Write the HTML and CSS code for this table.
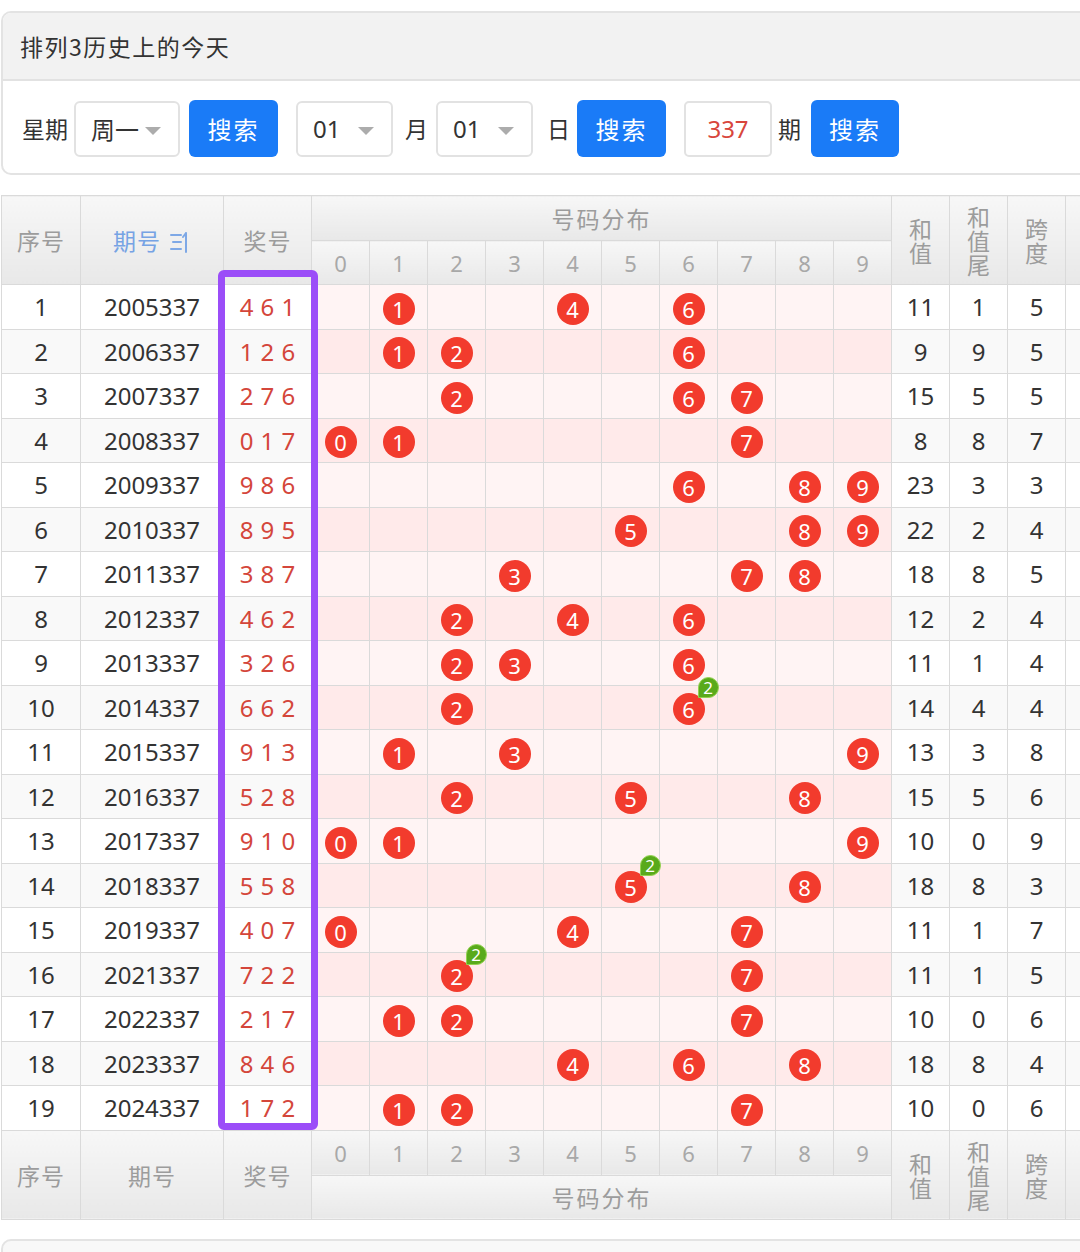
FILE: index.html
```html
<!DOCTYPE html>
<html lang="zh-CN">
<head>
<meta charset="utf-8">
<title>排列3历史上的今天</title>
<link rel="stylesheet" href="styles.css">
</head>
<body>
<div class="page">
  <div class="panel">
    <div class="panel-head">排列3历史上的今天</div>
    <div class="controls">
      <span class="lbl">星期</span>
      <div class="sel s-week">周一<span class="caret"></span></div>
      <div class="btn m-btn1">搜索</div>
      <div class="sel s-num m-sel2">01<span class="caret"></span></div>
      <span class="lbl m-yue">月</span>
      <div class="sel s-num m-sel3">01<span class="caret"></span></div>
      <span class="lbl m-ri">日</span>
      <div class="btn m-btn2">搜索</div>
      <div class="inp m-inp">337</div>
      <span class="lbl m-qi">期</span>
      <div class="btn m-btn3">搜索</div>
    </div>
  </div>

  <div class="grid-wrap">
    <table class="trend">
      <colgroup>
        <col class="c-seq"><col class="c-issue"><col class="c-award">
        <col class="c-d"><col class="c-d"><col class="c-d"><col class="c-d"><col class="c-d">
        <col class="c-d"><col class="c-d"><col class="c-d"><col class="c-d"><col class="c-d">
        <col class="c-d"><col class="c-d"><col class="c-d"><col class="c-d">
      </colgroup>
      <thead>
        <tr class="h1">
          <th rowspan="2">序号</th>
          <th rowspan="2" class="sort">期号 <svg class="sort-ic" width="22" height="24" viewBox="0 0 22 24"><g stroke="#7ea8e6" stroke-width="2" fill="none" stroke-linecap="round"><path d="M2 5h10M4 12h8M2 19h10"/><path d="M17 3v19M17 3l-3 4"/></g></svg></th>
          <th rowspan="2">奖号</th>
          <th colspan="10" class="dist">号码分布</th>
          <th rowspan="2" class="v"><span class="vt">和值</span></th>
          <th rowspan="2" class="v"><span class="vt">和值尾</span></th>
          <th rowspan="2" class="v"><span class="vt">跨度</span></th>
          <th rowspan="2"></th>
        </tr>
        <tr class="h2">
          <th class="dg">0</th><th class="dg">1</th><th class="dg">2</th><th class="dg">3</th><th class="dg">4</th><th class="dg">5</th><th class="dg">6</th><th class="dg">7</th><th class="dg">8</th><th class="dg">9</th>
        </tr>
      </thead>
      <tbody>
        <tr><td>1</td><td>2005337</td><td class="aw">4 6 1</td><td class="d"></td><td class="d"><i class="b">1</i></td><td class="d"></td><td class="d"></td><td class="d"><i class="b">4</i></td><td class="d"></td><td class="d"><i class="b">6</i></td><td class="d"></td><td class="d"></td><td class="d"></td><td>11</td><td>1</td><td>5</td><td></td></tr>
        <tr><td>2</td><td>2006337</td><td class="aw">1 2 6</td><td class="d"></td><td class="d"><i class="b">1</i></td><td class="d"><i class="b">2</i></td><td class="d"></td><td class="d"></td><td class="d"></td><td class="d"><i class="b">6</i></td><td class="d"></td><td class="d"></td><td class="d"></td><td>9</td><td>9</td><td>5</td><td></td></tr>
        <tr><td>3</td><td>2007337</td><td class="aw">2 7 6</td><td class="d"></td><td class="d"></td><td class="d"><i class="b">2</i></td><td class="d"></td><td class="d"></td><td class="d"></td><td class="d"><i class="b">6</i></td><td class="d"><i class="b">7</i></td><td class="d"></td><td class="d"></td><td>15</td><td>5</td><td>5</td><td></td></tr>
        <tr><td>4</td><td>2008337</td><td class="aw">0 1 7</td><td class="d"><i class="b">0</i></td><td class="d"><i class="b">1</i></td><td class="d"></td><td class="d"></td><td class="d"></td><td class="d"></td><td class="d"></td><td class="d"><i class="b">7</i></td><td class="d"></td><td class="d"></td><td>8</td><td>8</td><td>7</td><td></td></tr>
        <tr><td>5</td><td>2009337</td><td class="aw">9 8 6</td><td class="d"></td><td class="d"></td><td class="d"></td><td class="d"></td><td class="d"></td><td class="d"></td><td class="d"><i class="b">6</i></td><td class="d"></td><td class="d"><i class="b">8</i></td><td class="d"><i class="b">9</i></td><td>23</td><td>3</td><td>3</td><td></td></tr>
        <tr><td>6</td><td>2010337</td><td class="aw">8 9 5</td><td class="d"></td><td class="d"></td><td class="d"></td><td class="d"></td><td class="d"></td><td class="d"><i class="b">5</i></td><td class="d"></td><td class="d"></td><td class="d"><i class="b">8</i></td><td class="d"><i class="b">9</i></td><td>22</td><td>2</td><td>4</td><td></td></tr>
        <tr><td>7</td><td>2011337</td><td class="aw">3 8 7</td><td class="d"></td><td class="d"></td><td class="d"></td><td class="d"><i class="b">3</i></td><td class="d"></td><td class="d"></td><td class="d"></td><td class="d"><i class="b">7</i></td><td class="d"><i class="b">8</i></td><td class="d"></td><td>18</td><td>8</td><td>5</td><td></td></tr>
        <tr><td>8</td><td>2012337</td><td class="aw">4 6 2</td><td class="d"></td><td class="d"></td><td class="d"><i class="b">2</i></td><td class="d"></td><td class="d"><i class="b">4</i></td><td class="d"></td><td class="d"><i class="b">6</i></td><td class="d"></td><td class="d"></td><td class="d"></td><td>12</td><td>2</td><td>4</td><td></td></tr>
        <tr><td>9</td><td>2013337</td><td class="aw">3 2 6</td><td class="d"></td><td class="d"></td><td class="d"><i class="b">2</i></td><td class="d"><i class="b">3</i></td><td class="d"></td><td class="d"></td><td class="d"><i class="b">6</i></td><td class="d"></td><td class="d"></td><td class="d"></td><td>11</td><td>1</td><td>4</td><td></td></tr>
        <tr><td>10</td><td>2014337</td><td class="aw">6 6 2</td><td class="d"></td><td class="d"></td><td class="d"><i class="b">2</i></td><td class="d"></td><td class="d"></td><td class="d"></td><td class="d"><i class="b">6<em class="rep">2</em></i></td><td class="d"></td><td class="d"></td><td class="d"></td><td>14</td><td>4</td><td>4</td><td></td></tr>
        <tr><td>11</td><td>2015337</td><td class="aw">9 1 3</td><td class="d"></td><td class="d"><i class="b">1</i></td><td class="d"></td><td class="d"><i class="b">3</i></td><td class="d"></td><td class="d"></td><td class="d"></td><td class="d"></td><td class="d"></td><td class="d"><i class="b">9</i></td><td>13</td><td>3</td><td>8</td><td></td></tr>
        <tr><td>12</td><td>2016337</td><td class="aw">5 2 8</td><td class="d"></td><td class="d"></td><td class="d"><i class="b">2</i></td><td class="d"></td><td class="d"></td><td class="d"><i class="b">5</i></td><td class="d"></td><td class="d"></td><td class="d"><i class="b">8</i></td><td class="d"></td><td>15</td><td>5</td><td>6</td><td></td></tr>
        <tr><td>13</td><td>2017337</td><td class="aw">9 1 0</td><td class="d"><i class="b">0</i></td><td class="d"><i class="b">1</i></td><td class="d"></td><td class="d"></td><td class="d"></td><td class="d"></td><td class="d"></td><td class="d"></td><td class="d"></td><td class="d"><i class="b">9</i></td><td>10</td><td>0</td><td>9</td><td></td></tr>
        <tr><td>14</td><td>2018337</td><td class="aw">5 5 8</td><td class="d"></td><td class="d"></td><td class="d"></td><td class="d"></td><td class="d"></td><td class="d"><i class="b">5<em class="rep">2</em></i></td><td class="d"></td><td class="d"></td><td class="d"><i class="b">8</i></td><td class="d"></td><td>18</td><td>8</td><td>3</td><td></td></tr>
        <tr><td>15</td><td>2019337</td><td class="aw">4 0 7</td><td class="d"><i class="b">0</i></td><td class="d"></td><td class="d"></td><td class="d"></td><td class="d"><i class="b">4</i></td><td class="d"></td><td class="d"></td><td class="d"><i class="b">7</i></td><td class="d"></td><td class="d"></td><td>11</td><td>1</td><td>7</td><td></td></tr>
        <tr><td>16</td><td>2021337</td><td class="aw">7 2 2</td><td class="d"></td><td class="d"></td><td class="d"><i class="b">2<em class="rep">2</em></i></td><td class="d"></td><td class="d"></td><td class="d"></td><td class="d"></td><td class="d"><i class="b">7</i></td><td class="d"></td><td class="d"></td><td>11</td><td>1</td><td>5</td><td></td></tr>
        <tr><td>17</td><td>2022337</td><td class="aw">2 1 7</td><td class="d"></td><td class="d"><i class="b">1</i></td><td class="d"><i class="b">2</i></td><td class="d"></td><td class="d"></td><td class="d"></td><td class="d"></td><td class="d"><i class="b">7</i></td><td class="d"></td><td class="d"></td><td>10</td><td>0</td><td>6</td><td></td></tr>
        <tr><td>18</td><td>2023337</td><td class="aw">8 4 6</td><td class="d"></td><td class="d"></td><td class="d"></td><td class="d"></td><td class="d"><i class="b">4</i></td><td class="d"></td><td class="d"><i class="b">6</i></td><td class="d"></td><td class="d"><i class="b">8</i></td><td class="d"></td><td>18</td><td>8</td><td>4</td><td></td></tr>
        <tr><td>19</td><td>2024337</td><td class="aw">1 7 2</td><td class="d"></td><td class="d"><i class="b">1</i></td><td class="d"><i class="b">2</i></td><td class="d"></td><td class="d"></td><td class="d"></td><td class="d"></td><td class="d"><i class="b">7</i></td><td class="d"></td><td class="d"></td><td>10</td><td>0</td><td>6</td><td></td></tr>
      </tbody>
      <tfoot>
        <tr class="f1">
          <th rowspan="2">序号</th>
          <th rowspan="2">期号</th>
          <th rowspan="2">奖号</th>
          <th class="dg">0</th><th class="dg">1</th><th class="dg">2</th><th class="dg">3</th><th class="dg">4</th><th class="dg">5</th><th class="dg">6</th><th class="dg">7</th><th class="dg">8</th><th class="dg">9</th>
          <th rowspan="2" class="v"><span class="vt">和值</span></th>
          <th rowspan="2" class="v"><span class="vt">和值尾</span></th>
          <th rowspan="2" class="v"><span class="vt">跨度</span></th>
          <th rowspan="2"></th>
        </tr>
        <tr class="f2">
          <th colspan="10" class="dist">号码分布</th>
        </tr>
      </tfoot>
    </table>
    <div class="hl"></div>
  </div>

  <div class="panel panel-next"></div>
</div>
</body>
</html>
```
FILE: styles.css
```css
* { box-sizing: border-box; }
html, body { margin: 0; padding: 0; background: #fff; }
body {
  font-family: "Noto Sans", "Noto Sans CJK SC", sans-serif;
  color: #333;
}
.page {
  width: 1080px;
  height: 1252px;
  overflow: hidden;
  position: relative;
}

/* ---------- search panel ---------- */
.panel {
  margin: 11px 0 0 1px;
  width: 1110px;
  border: 2px solid #e3e3e3;
  border-radius: 10px;
  background: #fff;
}
.panel-head {
  height: 68px;
  background: #f2f2f2;
  border-bottom: 2px solid #e2e2e2;
  border-radius: 8px 8px 0 0;
  padding-left: 17px;
  display: flex;
  align-items: center;
  font-family: "Noto Sans CJK SC", sans-serif;
  font-size: 23px;
  letter-spacing: 1.5px;
  color: #333;
}
.controls {
  display: flex;
  align-items: center;
  padding: 19px 0 16px 19px;
}
.lbl {
  font-family: "Noto Sans CJK SC", sans-serif;
  font-size: 23px;
  color: #333;
  line-height: 1;
}
.sel {
  position: relative;
  height: 56px;
  border: 2px solid #e2e2e2;
  border-radius: 6px;
  display: flex;
  align-items: center;
  padding-left: 15px;
  font-size: 24px;
  color: #333;
  font-family: "Noto Sans", "Noto Sans CJK SC", sans-serif;
}
.s-week { width: 106px; margin-left: 6px; font-family: "Noto Sans CJK SC", sans-serif; }
.s-num { width: 97px; }
.caret {
  position: absolute;
  right: 17px;
  top: 24px;
  width: 0;
  height: 0;
  border-left: 8px solid transparent;
  border-right: 8px solid transparent;
  border-top: 8px solid #acacac;
}
.btn {
  height: 57px;
  width: 89px;
  background: #1a7bf7;
  border-radius: 6px;
  color: #fff;
  display: flex;
  align-items: center;
  justify-content: center;
  font-family: "Noto Sans CJK SC", sans-serif;
  font-size: 24px;
  letter-spacing: 2px;
}
.inp {
  width: 88px;
  height: 56px;
  border: 2px solid #e2e2e2;
  border-radius: 5px;
  display: flex;
  align-items: center;
  justify-content: center;
  color: #d8463c;
  font-size: 24px;
}
.m-btn1 { margin-left: 9px; }
.m-sel2 { margin-left: 18px; }
.m-yue { margin-left: 12px; }
.m-sel3 { margin-left: 8px; }
.m-ri { margin-left: 14px; }
.m-btn2 { margin-left: 7px; }
.m-inp { margin-left: 18px; }
.m-qi { margin-left: 6px; }
.m-btn3 { margin-left: 10px; width: 88px; }

/* ---------- trend table ---------- */
.grid-wrap {
  position: relative;
  margin-top: 20px;
}
.trend {
  border-collapse: collapse;
  table-layout: fixed;
  width: 1122px;
  margin-left: 1px;
}
.c-seq { width: 79px; }
.c-issue { width: 143px; }
.c-award { width: 88px; }
.c-d { width: 58px; }

.trend th, .trend td {
  border: 1px solid #dadada;
  padding: 0;
  text-align: center;
  vertical-align: middle;
  overflow: visible;
}
.trend th {
  font-weight: normal;
  color: #9c9c9c;
  font-family: "Noto Sans CJK SC", sans-serif;
  font-size: 23px;
  letter-spacing: 1px;
  background: linear-gradient(#f7f7f7, #e8e8e8);
}
.trend th.dg {
  font-family: "Noto Sans", sans-serif;
  font-size: 22px;
  letter-spacing: 0;
  color: #a8a8a8;
}
.trend th.sort { color: #76a3e4; }
.sort-ic { vertical-align: -4px; margin-left: 2px; }
.trend th.v { line-height: 24px; letter-spacing: 0; }
.vt {
  display: inline-block;
  width: 1em;
  word-break: break-all;
}
.h1 { height: 45px; }
.h2 { height: 44px; }
.f1 { height: 45px; }
.f2 { height: 44px; }
.trend th.dist { letter-spacing: 2px; }

.trend tbody tr { height: 44.5px; }
.trend td {
  font-size: 24px;
  color: #333;
  background: #fff;
}
.trend tbody tr:nth-child(even) td { background: #f9f9f9; }
.trend td.d { background: #fff4f4; }
.trend tbody tr:nth-child(even) td.d { background: #ffeaea; }
.trend td.aw { color: #d4463b; word-spacing: 1px; }

.b {
  position: relative;
  display: inline-flex;
  align-items: center;
  justify-content: center;
  width: 32px;
  height: 32px;
  border-radius: 50%;
  background: #f23b2d;
  color: #fff;
  font-style: normal;
  font-size: 22px;
  line-height: 1;
  vertical-align: middle;
}
.rep {
  position: absolute;
  left: 25px;
  top: -16px;
  width: 21px;
  height: 21px;
  border-radius: 50% 50% 50% 0;
  background: #59aa1b;
  border: 1px solid #93d24f;
  color: #fff;
  font-style: normal;
  font-size: 17px;
  line-height: 1;
  display: flex;
  align-items: center;
  justify-content: center;
}

.hl {
  position: absolute;
  left: 218px;
  top: 75px;
  width: 100px;
  height: 860px;
  border: 7px solid #9b4df8;
  border-radius: 6px;
  pointer-events: none;
}

.panel-next {
  margin-top: 19px;
  height: 60px;
  background: #f8f8f8;
}
```
